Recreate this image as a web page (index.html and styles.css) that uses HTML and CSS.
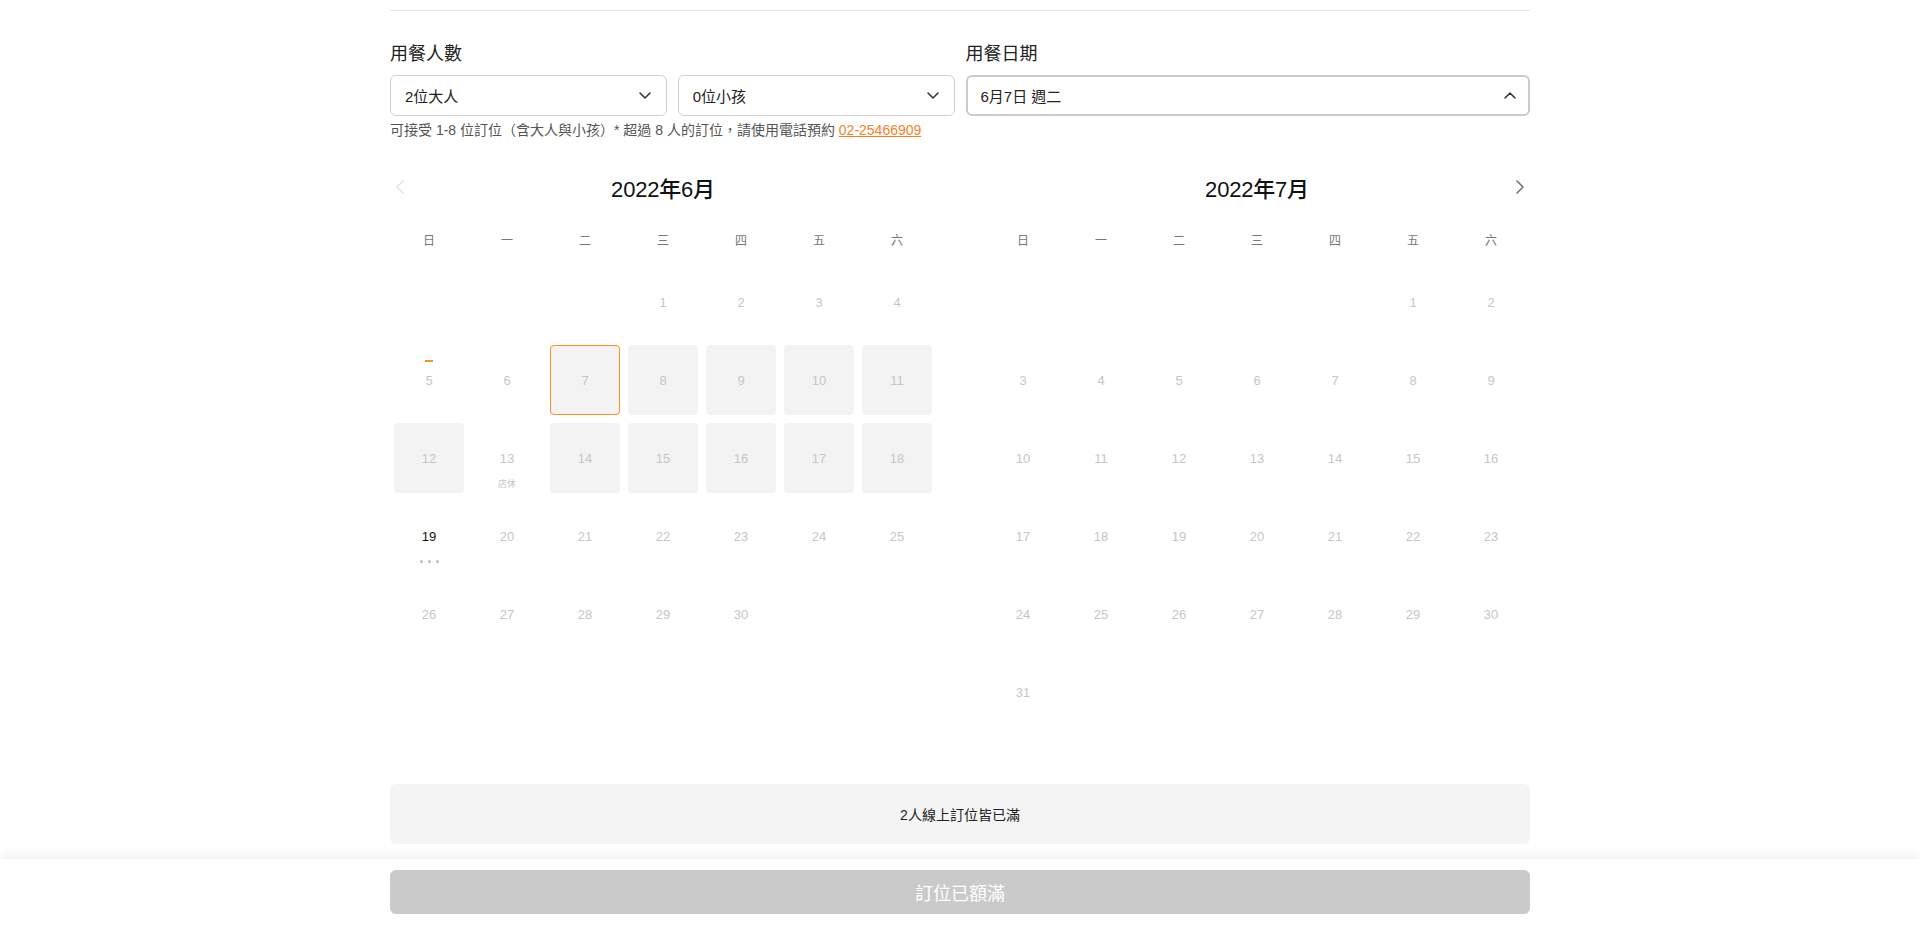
FILE: index.html
```html
<!DOCTYPE html>
<html lang="zh-Hant">
<head>
<meta charset="utf-8">
<title>訂位</title>
<link rel="stylesheet" href="styles.css">
</head>
<body>
<div class="page">
  <div class="divider"></div>

  <div class="fields">
    <div class="field-group">
      <div class="field-label">用餐人數</div>
      <div class="select-row">
        <div class="select">
          <span>2位大人</span>
          <svg class="chev" width="12" height="7" viewBox="0 0 12 7"><path d="M1 1l5 5 5-5" fill="none" stroke="#333" stroke-width="1.5" stroke-linecap="round" stroke-linejoin="round"/></svg>
        </div>
        <div class="select">
          <span>0位小孩</span>
          <svg class="chev" width="12" height="7" viewBox="0 0 12 7"><path d="M1 1l5 5 5-5" fill="none" stroke="#333" stroke-width="1.5" stroke-linecap="round" stroke-linejoin="round"/></svg>
        </div>
      </div>
    </div>
    <div class="field-group">
      <div class="field-label">用餐日期</div>
      <div class="select select-open">
        <span>6月7日 週二</span>
        <svg class="chev" width="12" height="7" viewBox="0 0 12 7"><path d="M1 6l5-5 5 5" fill="none" stroke="#333" stroke-width="1.5" stroke-linecap="round" stroke-linejoin="round"/></svg>
      </div>
    </div>
  </div>

  <p class="note">可接受 1-8 位訂位（含大人與小孩）* 超過 8 人的訂位，請使用電話預約 <a class="phone" href="#">02-25466909</a></p>

  <div class="calendars">
    <div class="month">
      <div class="month-head">
        <span class="nav nav-prev"><svg width="8" height="14" viewBox="0 0 8 14"><path d="M7 1L1 7l6 6" fill="none" stroke="#e2e2e2" stroke-width="1.5" stroke-linecap="round" stroke-linejoin="round"/></svg></span>
        <div class="month-title">2022年6月</div>
        <span class="nav nav-spacer"></span>
      </div>
      <div class="weekdays">
        <span>日</span><span>一</span><span>二</span><span>三</span><span>四</span><span>五</span><span>六</span>
      </div>
      <div class="days">
        <div class="day empty"></div><div class="day empty"></div><div class="day empty"></div>
        <div class="day">1</div><div class="day">2</div><div class="day">3</div><div class="day">4</div>
        <div class="day today">5</div><div class="day">6</div><div class="day full selected">7</div><div class="day full">8</div><div class="day full">9</div><div class="day full">10</div><div class="day full">11</div>
        <div class="day full">12</div><div class="day closed">13<span class="tag">店休</span></div><div class="day full">14</div><div class="day full">15</div><div class="day full">16</div><div class="day full">17</div><div class="day full">18</div>
        <div class="day active">19<span class="dots"><i></i><i></i><i></i></span></div><div class="day">20</div><div class="day">21</div><div class="day">22</div><div class="day">23</div><div class="day">24</div><div class="day">25</div>
        <div class="day">26</div><div class="day">27</div><div class="day">28</div><div class="day">29</div><div class="day">30</div>
      </div>
    </div>

    <div class="month">
      <div class="month-head">
        <span class="nav nav-spacer"></span>
        <div class="month-title">2022年7月</div>
        <span class="nav nav-next"><svg width="8" height="14" viewBox="0 0 8 14"><path d="M1 1l6 6-6 6" fill="none" stroke="#6f6f6f" stroke-width="1.5" stroke-linecap="round" stroke-linejoin="round"/></svg></span>
      </div>
      <div class="weekdays">
        <span>日</span><span>一</span><span>二</span><span>三</span><span>四</span><span>五</span><span>六</span>
      </div>
      <div class="days">
        <div class="day empty"></div><div class="day empty"></div><div class="day empty"></div><div class="day empty"></div><div class="day empty"></div>
        <div class="day">1</div><div class="day">2</div>
        <div class="day">3</div><div class="day">4</div><div class="day">5</div><div class="day">6</div><div class="day">7</div><div class="day">8</div><div class="day">9</div>
        <div class="day">10</div><div class="day">11</div><div class="day">12</div><div class="day">13</div><div class="day">14</div><div class="day">15</div><div class="day">16</div>
        <div class="day">17</div><div class="day">18</div><div class="day">19</div><div class="day">20</div><div class="day">21</div><div class="day">22</div><div class="day">23</div>
        <div class="day">24</div><div class="day">25</div><div class="day">26</div><div class="day">27</div><div class="day">28</div><div class="day">29</div><div class="day">30</div>
        <div class="day">31</div>
      </div>
    </div>
  </div>

  <div class="notice">2人線上訂位皆已滿</div>
</div>

<div class="footer">
  <div class="footer-btn">訂位已額滿</div>
</div>
</body>
</html>
```

FILE: styles.css
```css
* {
  box-sizing: border-box;
}

html, body {
  margin: 0;
  padding: 0;
  background: #fff;
}

body {
  font-family: "Liberation Sans", "Noto Sans CJK TC", sans-serif;
  color: #222;
  overflow: hidden;
}

.page {
  width: 1140px;
  margin: 0 auto;
  padding-top: 10px;
}

.divider {
  height: 1px;
  background: #e6e6e6;
}

.fields {
  display: flex;
  gap: 11px;
  margin-top: 31px;
}

.field-group {
  flex: 1;
  min-width: 0;
}

.field-label {
  font-size: 18px;
  line-height: 24px;
  color: #222;
  margin-bottom: 9px;
}

.select-row {
  display: flex;
  gap: 11px;
}

.select {
  flex: 1;
  height: 41px;
  border: 1px solid #d0d0d0;
  border-radius: 6px;
  display: flex;
  align-items: center;
  justify-content: space-between;
  padding: 0 15px 0 14px;
  font-size: 15px;
  color: #222;
}

.select-open {
  border: 2px solid #cbcbcb;
  padding: 0 12px 0 13px;
}

.chev {
  display: block;
}

.note {
  margin: 5px 0 0;
  font-size: 14px;
  line-height: 18px;
  color: #555;
}

.phone {
  color: #f5821f;
  text-decoration: underline;
}

.calendars {
  display: flex;
  justify-content: space-between;
  align-items: flex-start;
  margin-top: 33px;
}

.month {
  width: 546px;
}

.month-head {
  display: flex;
  align-items: center;
  height: 30px;
}

.nav {
  width: 20px;
  height: 30px;
  display: flex;
  align-items: center;
  justify-content: center;
}

.month-title {
  flex: 1;
  text-align: center;
  font-size: 22px;
  font-weight: 500;
  color: #111;
  letter-spacing: -0.2px;
}

.weekdays {
  display: grid;
  grid-template-columns: repeat(7, 78px);
  height: 44px;
  line-height: 44px;
  margin-top: 17px;
  text-align: center;
  font-size: 12px;
  color: #777;
}

.days {
  display: grid;
  grid-template-columns: repeat(7, 78px);
  grid-auto-rows: 78px;
}

.day {
  position: relative;
  margin: 4px;
  border-radius: 4px;
  display: flex;
  align-items: center;
  justify-content: center;
  font-size: 13px;
  color: #c6c6c6;
}

.day.full {
  background: #f3f3f3;
}

.day.selected {
  border: 1px solid #f7901e;
}

.day.active {
  color: #111;
  font-weight: 500;
}

.day.today::before {
  content: "";
  position: absolute;
  top: 15px;
  left: 50%;
  width: 8px;
  height: 2px;
  margin-left: -4px;
  background: #f7901e;
}

.tag {
  position: absolute;
  top: 54px;
  left: 0;
  right: 0;
  text-align: center;
  font-size: 9px;
  color: #c4c4c4;
}

.dots {
  position: absolute;
  top: 59px;
  left: 0;
  right: 0;
  display: flex;
  justify-content: center;
  gap: 5px;
}

.dots i {
  width: 3px;
  height: 3px;
  border-radius: 50%;
  background: #bdbdbd;
}

.notice {
  margin-top: 53px;
  height: 60px;
  border-radius: 6px;
  background: #f4f4f4;
  display: flex;
  align-items: center;
  justify-content: center;
  font-size: 14px;
  color: #222;
}

.footer {
  position: fixed;
  left: 0;
  right: 0;
  bottom: 0;
  background: #fff;
  padding: 11px 0;
  box-shadow: 0 -3px 10px rgba(0, 0, 0, 0.07);
}

.footer-btn {
  width: 1140px;
  margin: 0 auto;
  height: 44px;
  border-radius: 6px;
  background: #cacaca;
  color: #fff;
  font-size: 18px;
  display: flex;
  align-items: center;
  justify-content: center;
}
```
